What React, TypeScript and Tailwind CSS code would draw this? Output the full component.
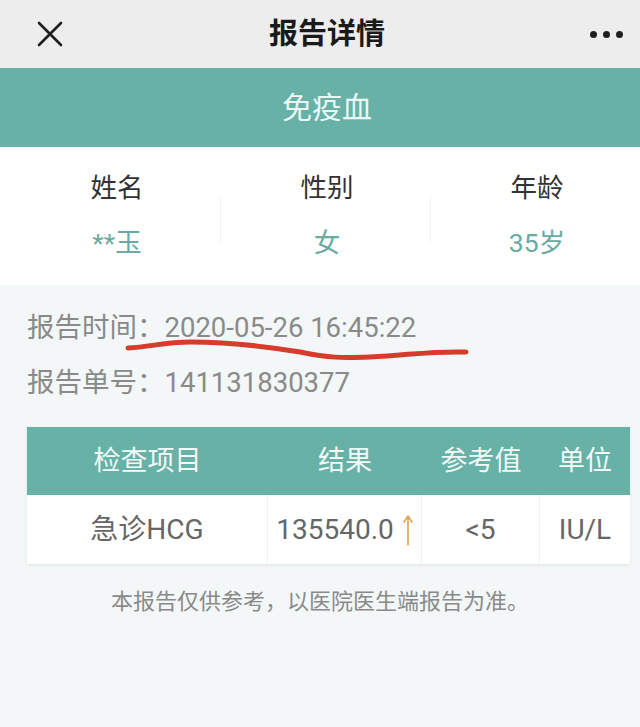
import React from "react";

const font = { fontFamily: '"Roboto", "Noto Sans CJK SC", sans-serif' };

const people = [
  { label: "姓名", value: "**玉" },
  { label: "性别", value: "女" },
  { label: "年龄", value: "35岁" },
];

const CloseIcon = () => (
  <svg width="26" height="26" viewBox="0 0 26 26" fill="none">
    <path d="M2 2L24 24M24 2L2 24" stroke="#1f1f1f" strokeWidth="2.6" strokeLinecap="round" />
  </svg>
);

const UpArrow = () => (
  <svg width="10" height="32" viewBox="0 0 10 32" fill="none">
    <path d="M5 2V31M1 8L5 2L9 8" stroke="#e2a24f" strokeWidth="1.6" strokeLinecap="round" strokeLinejoin="round" />
  </svg>
);

export default function App() {
  return (
    <div className="min-h-screen w-[640px] bg-[#f3f7f7]" style={font}>
      {/* nav bar */}
      <div className="flex h-[68px] items-center bg-[#ededed]">
        <div className="flex w-[124px] pl-[37px]">
          <CloseIcon />
        </div>
        <div className="flex-1 text-center text-[29px] font-bold leading-none text-[#1a1a1a]">报告详情</div>
        <div className="flex w-[110px] justify-end gap-[6px] pr-[17px]">
          <span className="h-[7px] w-[7px] rounded-full bg-[#1f1f1f]" />
          <span className="h-[7px] w-[7px] rounded-full bg-[#1f1f1f]" />
          <span className="h-[7px] w-[7px] rounded-full bg-[#1f1f1f]" />
        </div>
      </div>

      {/* banner */}
      <div className="flex h-[79px] items-center justify-center bg-[#68b1a6] pl-[14px] text-[30px] text-[#eaf8f4]">免疫血</div>

      {/* patient */}
      <div className="h-[138px] bg-white pt-[25px]">
        <div className="ml-[12px] grid w-[630px] grid-cols-3">
          {people.map((p, i) => (
            <div key={p.label} className="relative flex flex-col items-center gap-[24px]">
              <div className="text-[26.5px] leading-[31px] text-[#333]">{p.label}</div>
              <div className="text-[26.5px] leading-[31px] text-[#6aaa9f]">{p.value}</div>
              {i > 0 && <div className="absolute left-[-2px] top-[24px] h-[46px] w-px bg-[#f2f2f2]" />}
            </div>
          ))}
        </div>
      </div>

      {/* report meta */}
      <div className="relative flex flex-col gap-[25px] px-[27px] pt-[28px] text-[27.5px] leading-[30px] text-[#8a8a8a]">
        <div>报告时间：2020-05-26 16:45:22</div>
        <div>报告单号：141131830377</div>
        <svg className="absolute left-0 top-0" width="640" height="120" viewBox="0 0 640 120" fill="none">
          <path
            d="M128 63C150 62 165 57 190 57C230 57 270 62 300 67C330 73 340 73 370 72C410 70 430 66 466 67"
            stroke="#d63b2b"
            strokeWidth="5"
            strokeLinecap="round"
          />
        </svg>
      </div>

      {/* results table */}
      <div className="ml-[27px] mt-[29px] w-[603px] shadow-[0_1px_3px_rgba(0,0,0,0.08)]">
        <div className="grid h-[68px] grid-cols-[241px_154px_118px_90px] items-center bg-[#68b1a6] text-center text-[27px] text-[#f2fbf8]">
          <div>检查项目</div>
          <div>结果</div>
          <div>参考值</div>
          <div>单位</div>
        </div>
        <div className="grid h-[69px] grid-cols-[241px_154px_118px_90px] bg-white text-center text-[28px] text-[#666]">
          <div className="flex items-center justify-center border-r border-[#eef1f1]">急诊HCG</div>
          <div className="flex items-center justify-center gap-[9px] border-r border-[#eef1f1]">
            135540.0
            <UpArrow />
          </div>
          <div className="flex items-center justify-center border-r border-[#eef1f1]">&lt;5</div>
          <div className="flex items-center justify-center">IU/L</div>
        </div>
      </div>

      <div className="mt-[23px] text-center text-[22px] leading-[30px] text-[#8a8a8a]">本报告仅供参考，以医院医生端报告为准。</div>
    </div>
  );
}
